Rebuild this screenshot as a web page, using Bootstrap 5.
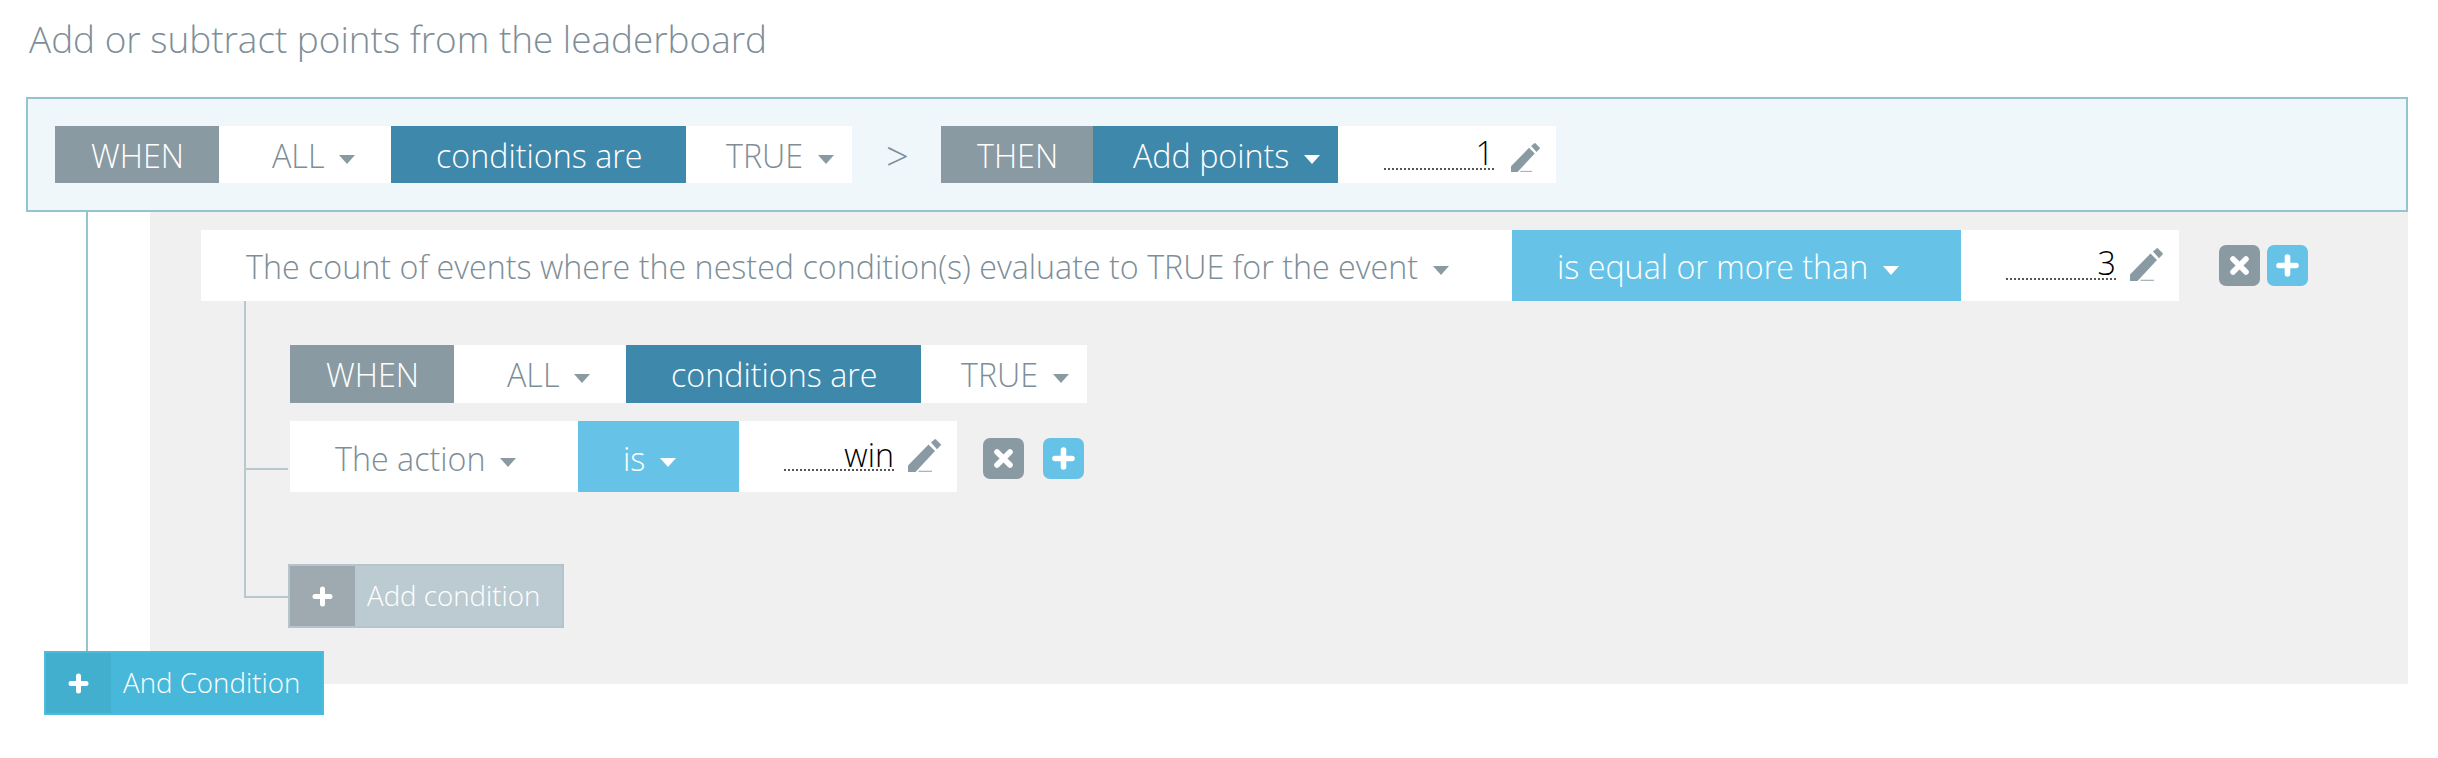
<!DOCTYPE html>
<html lang="en">
<head>
<meta charset="utf-8">
<title>Leaderboard rule</title>
<link rel="stylesheet" href="https://cdn.jsdelivr.net/npm/bootstrap@5.3.0/dist/css/bootstrap.min.css">
<style>
body{font-family:"Open Sans","Noto Sans",sans-serif;font-weight:300;font-size:32.25px;color:#7d8e98;background:#fff;overflow:hidden}
.page-wrap{width:2438px;height:758px;position:relative}
.rule-title{font-size:36.9px;font-weight:300;line-height:40px;margin:0;padding:19px 0 0 29px;height:97px;color:#7d8e98}
.top-box{margin-left:26px;width:2382px;height:115px;border:2px solid #93c4d0;background:#eff7fa;padding-left:27px;padding-top:27px}
.cell{height:57px;display:flex;align-items:center;white-space:nowrap;flex:none;line-height:1;padding-top:3px}
.cell.tall{height:71px}
.cell.nest-h{height:58px}
.row-two .cell{padding-top:6px}
.c-gray{background:#8a9aa2;color:#fff}
.c-dark{background:#3e88ab;color:#fff}
.c-sky{background:#66c3e7;color:#fff}
.c-white{background:#fff;color:#7d8e98}
.tri{display:inline-block;width:0;height:0;border-style:solid;border-width:9px 8px 0 8px;border-color:#8a9aa3 transparent transparent;margin-left:15px;margin-top:6px}
.tri.on{border-top-color:#fff}
.gt{width:89px;font-size:40px;color:#7d8e98;justify-content:center;padding-left:2px}
.w-164{width:164px;padding-left:36px}.w-172{width:172px;padding-left:53px}.w-295{width:295px;padding-left:45px}.w-166{width:166px;padding-left:40px}.w-152{width:152px;padding-left:36px}
.w-245{width:245px;padding-left:40px}.w-218{width:218px}.w-1311{width:1311px;padding-left:45px}.w-449{width:449px;padding-left:45px}.w-288{width:288px;padding-left:45px}.w-161{width:161px;padding-left:45px}
.val-wrap{display:flex;align-items:flex-end;justify-content:flex-end;padding-right:16px;padding-bottom:11px}
.cell.tall.val-wrap{padding-bottom:20px}
.val{width:110px;text-align:right;color:#000;font-weight:300;border-bottom:2px dotted #555;line-height:34px;height:34px;display:block;margin-bottom:2px}
.cell.tall .val{margin-bottom:1px}
.row-two .val{line-height:35px}
.pen{width:29px;height:29px;margin-left:17px;display:block;flex:none}
.cell.tall .pen{width:33px;height:33px;margin-left:14px}
.gray-zone{margin-left:150px;width:2258px;height:472px;background:#f0f0f0;padding-left:51px;padding-top:18px;position:relative}
.trunk{position:absolute;left:86px;top:212px;width:2px;height:439px;background:#93c4d0}
.sq-btn{width:41px;height:41px;border:0;padding:0;border-radius:7px;display:flex;align-items:center;justify-content:center;flex:none}
.sq-x{background:#8a9aa2}
.sq-plus{background:#66c3e7}
.sq-x:hover{background:#8a9aa2}.sq-plus:hover{background:#66c3e7}
.gap-top-l{margin-left:40px;margin-right:7px}
.gap-nest-l{margin-left:26px;margin-right:19px;margin-top:4px}
.nudge{margin-top:4px}
.nest{position:relative;padding-left:89px;padding-top:44px}
.nest-line{position:absolute;left:43px;top:0;width:46px;height:297px;border-left:2px solid #b9c7cf;border-bottom:2px solid #b9c7cf}
.nest-tick{position:absolute;left:43px;top:167px;width:44px;height:2px;background:#b9c7cf}
.row-two{margin-top:18px}
.add-btn{display:flex;align-items:stretch;padding:0;border-radius:0;font-size:27.7px;font-weight:300;color:#fff;line-height:1}
.add-ico{display:flex;align-items:center;justify-content:center}
.add-txt{display:flex;align-items:center;white-space:nowrap}
.add-cond{width:276px;height:64px;margin-top:72px;margin-left:-2px;background:#bccbd2;border:2px solid #b4c4cc}
.add-cond:hover{background:#bccbd2;border-color:#b4c4cc;color:#fff}
.add-cond .add-ico{width:65px;background:#9faab0}
.add-cond .add-txt{padding-left:12px}
.and-cond{position:absolute;left:44px;top:651px;width:280px;height:64px;background:#48b8da;border:2px solid #4dbbdc}
.and-cond:hover{background:#48b8da;border-color:#4dbbdc;color:#fff}
.and-cond .add-ico{width:65px;background:#43afcf}
.and-cond .add-txt{padding-left:12px}
</style>
</head>
<body>
<svg class="d-none"><defs><symbol id="pencil" viewBox="0 0 33 33"><path fill="#8a9aa3" d="M0 33V26.500L20.500 5.500 27 12 7.500 33Z"/><path fill="#8a9aa3" d="M23 3.500 26.500 .4Q27.300 -.2 28 .5L32.500 5Q33.200 5.800 32.600 6.500L29 10.300Z"/><rect x="10.500" y="31.700" width="13.500" height="1.300" fill="#a9b6bc"/></symbol></defs></svg>
<div class="page-wrap">
  <h1 class="rule-title">Add or subtract points from the leaderboard</h1>

  <div class="top-box d-flex">
    <div class="cell c-gray w-164">WHEN</div>
    <div class="cell c-white w-172">ALL<span class="tri"></span></div>
    <div class="cell c-dark w-295">conditions are</div>
    <div class="cell c-white w-166">TRUE<span class="tri"></span></div>
    <div class="cell gt">&gt;</div>
    <div class="cell c-gray w-152">THEN</div>
    <div class="cell c-dark w-245">Add points<span class="tri on"></span></div>
    <div class="cell c-white w-218 val-wrap"><span class="val">1</span><svg class="pen"><use href="#pencil"/></svg></div>
  </div>

  <div class="trunk"></div>

  <div class="gray-zone">
    <div class="d-flex align-items-center">
      <div class="cell tall c-white w-1311">The count of events where the nested condition(s) evaluate to TRUE for the event<span class="tri"></span></div>
      <div class="cell tall c-sky w-449">is equal or more than<span class="tri on"></span></div>
      <div class="cell tall c-white w-218 val-wrap"><span class="val">3</span><svg class="pen"><use href="#pencil"/></svg></div>
      <button class="sq-btn sq-x btn gap-top-l" type="button" aria-label="Remove"><svg width="21" height="21" viewBox="0 0 21 21"><path stroke="#fff" stroke-width="5.600" stroke-linecap="round" d="M4 4 17 17M17 4 4 17"/></svg></button>
      <button class="sq-btn sq-plus btn" type="button" aria-label="Add"><svg width="23" height="23" viewBox="0 0 23 23"><path stroke="#fff" stroke-width="5.600" stroke-linecap="round" d="M11.500 3V20M3 11.500H20"/></svg></button>
    </div>

    <div class="nest">
      <div class="nest-line"></div>
      <div class="nest-tick"></div>
      <div class="d-flex">
        <div class="cell nest-h c-gray w-164">WHEN</div>
        <div class="cell nest-h c-white w-172">ALL<span class="tri"></span></div>
        <div class="cell nest-h c-dark w-295">conditions are</div>
        <div class="cell nest-h c-white w-166">TRUE<span class="tri"></span></div>
      </div>
      <div class="d-flex align-items-center row-two">
        <div class="cell tall c-white w-288">The action<span class="tri"></span></div>
        <div class="cell tall c-sky w-161">is<span class="tri on"></span></div>
        <div class="cell tall c-white w-218 val-wrap"><span class="val">win</span><svg class="pen"><use href="#pencil"/></svg></div>
        <button class="sq-btn sq-x btn gap-nest-l" type="button" aria-label="Remove"><svg width="21" height="21" viewBox="0 0 21 21"><path stroke="#fff" stroke-width="5.600" stroke-linecap="round" d="M4 4 17 17M17 4 4 17"/></svg></button>
        <button class="sq-btn sq-plus btn nudge" type="button" aria-label="Add"><svg width="23" height="23" viewBox="0 0 23 23"><path stroke="#fff" stroke-width="5.600" stroke-linecap="round" d="M11.500 3V20M3 11.500H20"/></svg></button>
      </div>
      <button class="btn add-btn add-cond" type="button"><span class="add-ico"><svg width="21" height="21" viewBox="0 0 21 21"><path stroke="#fff" stroke-width="5" stroke-linecap="round" d="M10.500 3V18M3 10.500H18"/></svg></span><span class="add-txt">Add condition</span></button>
    </div>
  </div>

  <button class="btn add-btn and-cond" type="button"><span class="add-ico"><svg width="21" height="21" viewBox="0 0 21 21"><path stroke="#fff" stroke-width="5" stroke-linecap="round" d="M10.500 3V18M3 10.500H18"/></svg></span><span class="add-txt">And Condition</span></button>
</div>
</body>
</html>
